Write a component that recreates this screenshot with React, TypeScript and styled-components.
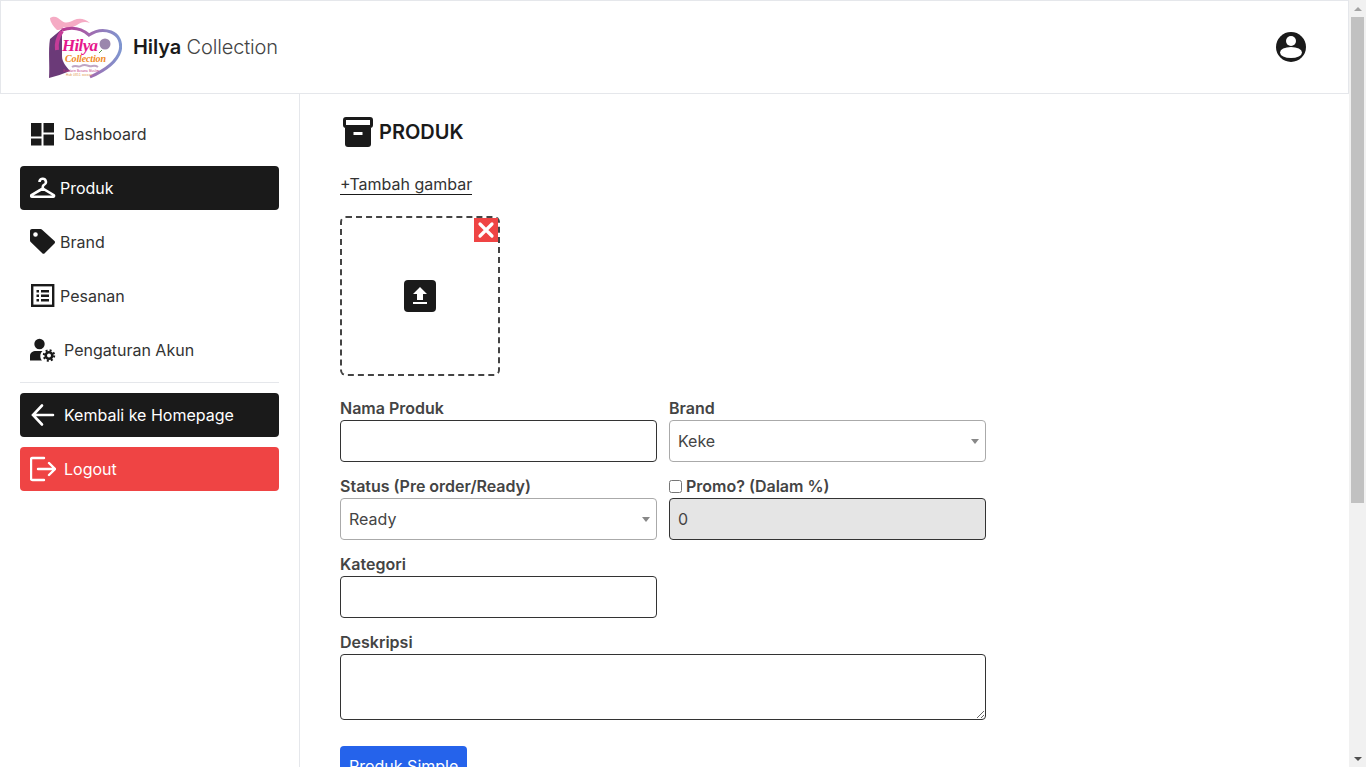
import React from 'react';
import styled, { createGlobalStyle } from 'styled-components';

const GlobalStyle = createGlobalStyle`
  * { box-sizing: border-box; }
  body {
    margin: 0;
    font-family: Inter, "Liberation Sans", sans-serif;
    font-size: 16px;
    color: #1a1a1a;
    background: #fff;
  }
`;

const Page = styled.div`
  display: flex;
  flex-direction: column;
  min-height: 1157px;
  margin-right: 17px;
`;

const ScrollRail = styled.div`
  position: fixed;
  top: 0;
  right: 0;
  bottom: 0;
  display: flex;
  flex-direction: column;
  width: 17px;
  background: #f1f1f1;
`;

const ScrollArrow = styled.div<{ $down?: boolean }>`
  display: flex;
  align-items: center;
  justify-content: center;
  flex: none;
  height: 17px;
  &::before {
    content: '';
    border-style: solid;
    border-width: ${(p) => (p.$down ? '4px 4px 0' : '0 4px 4px')};
    border-color: ${(p) =>
      p.$down
        ? '#505050 transparent transparent'
        : 'transparent transparent #a3a3a3'};
  }
`;

const ScrollThumb = styled.div`
  flex: none;
  height: 486px;
  margin: 0 2px;
  background: #c1c1c1;
`;

const ScrollGap = styled.div`
  flex: 1;
`;

const Header = styled.header`
  display: flex;
  align-items: center;
  justify-content: space-between;
  height: 94px;
  padding: 0 42px 0 47px;
  border: 1px solid #e5e7eb;
`;

const Brand = styled.div`
  display: flex;
  align-items: center;
  gap: 11px;
`;

const BrandName = styled.div`
  font-size: 20px;
  font-weight: 300;
  letter-spacing: -0.13px;
  color: #444;
  b {
    font-weight: 600;
    color: #1a1a1a;
  }
`;

const Body = styled.div`
  display: flex;
  flex: 1;
`;

const Sidebar = styled.nav`
  display: flex;
  flex-direction: column;
  gap: 10px;
  flex: none;
  width: 300px;
  padding: 18px 20px;
  border-right: 1px solid #e5e7eb;
`;

type Tone = 'plain' | 'dark' | 'red';

const NavItem = styled.a<{ $tone?: Tone; $gap?: number }>`
  display: flex;
  align-items: center;
  gap: ${(p) => p.$gap ?? 4}px;
  height: 44px;
  padding: 0 10px;
  border-radius: 4px;
  font-weight: 400;
  color: ${(p) => (p.$tone === 'dark' || p.$tone === 'red' ? '#fff' : '#333')};
  background: ${(p) =>
    p.$tone === 'dark' ? '#1a1a1a' : p.$tone === 'red' ? '#ef4444' : 'transparent'};
`;

const NavIcon = styled.svg`
  flex: none;
  width: 26px;
  height: 26px;
`;

const Divider = styled.hr`
  width: 100%;
  margin: 0;
  border: 0;
  border-top: 1px solid #e5e7eb;
`;

const Main = styled.main`
  flex: 1;
  padding: 23px 40px 0;
`;

const Title = styled.h1`
  display: flex;
  align-items: center;
  gap: 6px;
  margin: 0 0 27px;
  font-size: 20px;
  line-height: 30px;
  font-weight: 600;
  svg {
    margin-left: 3px;
  }
`;

const AddImage = styled.a`
  display: inline-block;
  height: 21px;
  line-height: 20px;
  color: #333;
  border-bottom: 1px solid #1a1a1a;
`;

const UploadBox = styled.div`
  position: relative;
  display: flex;
  align-items: center;
  justify-content: center;
  width: 160px;
  height: 160px;
  margin: 21px 0 20px;
  border: 2px dashed #444;
  border-radius: 6px;
`;

const UploadButton = styled.div`
  display: flex;
  align-items: center;
  justify-content: center;
  width: 32px;
  height: 32px;
  border-radius: 4px;
  background: #1a1a1a;
`;

const RemoveButton = styled.div`
  position: absolute;
  top: 0;
  right: 0;
  display: flex;
  align-items: center;
  justify-content: center;
  width: 24px;
  height: 24px;
  background: #ef4444;
`;

const FormGrid = styled.div`
  display: grid;
  grid-template-columns: 317px 317px;
  column-gap: 12px;
  row-gap: 12px;
  width: 646px;
`;

const Field = styled.div<{ $wide?: boolean }>`
  grid-column: ${(p) => (p.$wide ? '1 / 3' : 'auto')};
  display: flex;
  flex-direction: column;
`;

const Label = styled.label`
  display: flex;
  align-items: center;
  gap: 4px;
  height: 24px;
  font-weight: 600;
  color: #444;
  input {
    width: 13px;
    height: 13px;
    margin: 0;
  }
`;

const TextInput = styled.input<{ $muted?: boolean }>`
  width: 100%;
  height: 42px;
  padding: 0 8px;
  border: 1px solid #333;
  border-radius: 4px;
  font: inherit;
  color: #444;
  background: ${(p) => (p.$muted ? '#e5e5e5' : '#fff')};
`;

const TextArea = styled.textarea`
  display: block;
  width: 100%;
  height: 66px;
  border: 1px solid #333;
  border-radius: 4px;
  font: inherit;
  background: #fff;
`;

const SelectBox = styled.div`
  display: flex;
  align-items: center;
  justify-content: space-between;
  height: 42px;
  padding: 0 6px 0 8px;
  border: 1px solid #aaa;
  border-radius: 4px;
  color: #444;
  &::after {
    content: '';
    border-style: solid;
    border-width: 5px 4px 0;
    border-color: #888 transparent transparent;
  }
`;

const SubmitButton = styled.button`
  display: block;
  height: 40px;
  margin-top: 26px;
  padding: 0 9px;
  border: 0;
  border-radius: 4px;
  font: inherit;
  font-weight: 400;
  color: #fff;
  background: #2563eb;
`;

function HeartLogo(): JSX.Element {
  return (
    <svg width="74" height="64" viewBox="8 6 74 64">
      <defs>
        <linearGradient id="heart" x1="0" y1="0" x2="1" y2="0">
          <stop offset="0" stopColor="#b8358f" />
          <stop offset="0.5" stopColor="#a06cb0" />
          <stop offset="1" stopColor="#7f95cf" />
        </linearGradient>
      </defs>
      <path
        d="M10 9c5-3 8 0 12 3 4 3 8 1 12-1 5-2 10-2 16 3-5-2-9-1-13 2-5 3-10 4-13 2-3 3-5 3-7 3-3-3-7-8-7-12z"
        fill="#f5abc4"
      />
      <path d="M22 20L10 30C8 42 10 56 9 69c7-2 14-4 21-7-4-5-8-9-8-15z" fill="#6b3a78" />
      <path
        d="M22 21c9-3 19-2 27 5 6-4 14-6 22-3 8 3 11 11 9 19-3 10-14 19-30 26"
        fill="none"
        stroke="url(#heart)"
        strokeWidth="3"
      />
      <path d="M22 22c-4 6-6 13-5 19" fill="none" stroke="#c53c98" strokeWidth="4" />
      <text x="22" y="42" fontFamily="Liberation Serif" fontStyle="italic" fontWeight="700" fontSize="17" fill="#e6178c" textLength="36">
        Hilya
      </text>
      <circle cx="65" cy="35" r="5.500" fill="#9b86ad" />
      <path d="M59 44l3-3" stroke="#5a9a4a" strokeWidth="1" />
      <text x="25" y="53" fontFamily="Liberation Serif" fontStyle="italic" fontWeight="700" fontSize="10" fill="#f08a24" textLength="41">
        Collection
      </text>
      <path d="M32 58c4-3 6 1 9-1s5-1 8 0 5-2 9 1" fill="none" stroke="#bfa6c4" strokeWidth="2" />
      <text x="23" y="63" fontFamily="Liberation Sans" fontSize="3" fill="#c2347f" textLength="36">
        Bandarin Busana Muslim
      </text>
      <text x="26" y="67" fontFamily="Liberation Sans" fontSize="3" fill="#e0913c" textLength="26">
        Hub 0851 xxxxxx
      </text>
    </svg>
  );
}

export default function App(): JSX.Element {
  return (
    <Page>
      <GlobalStyle />
      <Header>
        <Brand>
          <HeartLogo />
          <BrandName>
            <b>Hilya</b> Collection
          </BrandName>
        </Brand>
        <svg width="30" height="30" viewBox="0 0 30 30">
          <circle cx="15" cy="15" r="15" fill="#1a1a1a" />
          <circle cx="15" cy="9" r="5" fill="#fff" />
          <ellipse cx="15" cy="20.500" rx="11" ry="5.500" fill="#fff" />
        </svg>
      </Header>
      <Body>
        <Sidebar>
          <NavItem $gap={8}>
            <NavIcon viewBox="0 0 26 26" fill="#1a1a1a">
              <path d="M1 2h10.500v13.500H1zM1 17.500h10.500v7H1zM13.500 2H24v9.500H13.500zM13.500 13.500H24V24.500H13.500z" />
            </NavIcon>
            Dashboard
          </NavItem>
          <NavItem $tone="dark">
            <NavIcon viewBox="0 0 26 26" fill="none" stroke="#fff" strokeWidth="2.600">
              <path d="M9.500 7a3.200 3.200 0 1 1 4.500 2.900c-.7.4-1.200.9-1.200 1.800v1.800L23.600 20c.8.600.4 1.700-.5 1.700H2c-.9 0-1.300-1.100-.5-1.700l11.300-6.500" />
            </NavIcon>
            Produk
          </NavItem>
          <NavItem>
            <NavIcon viewBox="1 0 26 26" fill="#1a1a1a">
              <path
                fillRule="evenodd"
                d="M3 0h8.500c.7 0 1.200.2 1.600.7L25.500 12c.7.700.7 1.700 0 2.400l-9.800 9.800c-.7.7-1.700.7-2.400 0L1.700 13C1.200 12.500 1 11.900 1 11.200V2C1 .9 1.900 0 3 0zM6.500 3.200a2.300 2.300 0 1 0 0 4.600 2.300 2.300 0 0 0 0-4.600z"
              />
            </NavIcon>
            Brand
          </NavItem>
          <NavItem>
            <NavIcon viewBox="0 0 26 26">
              <rect x="2.200" y="2.200" width="21" height="20.600" fill="none" stroke="#1a1a1a" strokeWidth="2.400" />
              <path
                d="M6.500 7h2.500v2.500H6.500zM11 7h8v2.500h-8zM6.500 11.500h2.500V14H6.500zM11 11.500h8V14h-8zM6.500 16h2.500v2.500H6.500zM11 16h8v2.500h-8z"
                fill="#1a1a1a"
              />
            </NavIcon>
            Pesanan
          </NavItem>
          <NavItem $gap={8}>
            <NavIcon viewBox="1 0 26 26" fill="#1a1a1a">
              <circle cx="10.500" cy="7" r="5.200" />
              <path d="M1 23.500v-4.500c0-3.300 2.700-5 6-5h6.500c-1.300 1.200-2.200 3-2.200 5 0 1.800.6 3.300 1.600 4.500z" />
              <circle cx="20" cy="18.500" r="3.300" fill="none" stroke="#1a1a1a" strokeWidth="2.600" />
              <circle cx="20" cy="18.500" r="5.200" fill="none" stroke="#1a1a1a" strokeWidth="2" strokeDasharray="2 2.080" />
            </NavIcon>
            Pengaturan Akun
          </NavItem>
          <Divider />
          <NavItem $tone="dark" $gap={8}>
            <NavIcon viewBox="0 0 26 26" fill="none" stroke="#fff" strokeWidth="2.600" strokeLinecap="round">
              <path d="M23 13H3.500M12 3.500L3 13l9 9.500" />
            </NavIcon>
            Kembali ke Homepage
          </NavItem>
          <NavItem $tone="red" $gap={8}>
            <NavIcon viewBox="0 0 26 26" fill="none" stroke="#fff" strokeWidth="2.400" strokeLinecap="round">
              <path d="M14 2H2.500A1.500 1.500 0 0 0 1 3.500v19A1.500 1.500 0 0 0 2.500 24H14M8 13h17M19 7l6 6-6 6" />
            </NavIcon>
            Logout
          </NavItem>
        </Sidebar>
        <Main>
          <Title>
            <svg width="30" height="30" viewBox="0 0 30 30">
              <rect x="1.500" y="1.500" width="27" height="8" rx="1.500" fill="#fff" stroke="#1a1a1a" strokeWidth="3" />
              <path d="M2 10.500h26V27a3 3 0 0 1-3 3H5a3 3 0 0 1-3-3z" fill="#1a1a1a" />
              <rect x="10.500" y="15" width="9" height="3" fill="#fff" />
            </svg>
            PRODUK
          </Title>
          <AddImage>+Tambah gambar</AddImage>
          <UploadBox>
            <UploadButton>
              <svg width="24" height="24" viewBox="0 0 24 24" fill="#fff">
                <path d="M9 16h6v-6h4l-7-7-7 7h4zm-4 2h14v2H5z" />
              </svg>
            </UploadButton>
            <RemoveButton>
              <svg width="18" height="18" viewBox="0 0 18 18" stroke="#fff" strokeWidth="3.200" strokeLinecap="round">
                <path d="M3 3l12 12M15 3L3 15" />
              </svg>
            </RemoveButton>
          </UploadBox>
          <FormGrid>
            <Field>
              <Label>Nama Produk</Label>
              <TextInput />
            </Field>
            <Field>
              <Label>Brand</Label>
              <SelectBox>Keke</SelectBox>
            </Field>
            <Field>
              <Label>Status (Pre order/Ready)</Label>
              <SelectBox>Ready</SelectBox>
            </Field>
            <Field>
              <Label>
                <input type="checkbox" />
                Promo? (Dalam %)
              </Label>
              <TextInput $muted defaultValue="0" disabled />
            </Field>
            <Field>
              <Label>Kategori</Label>
              <TextInput />
            </Field>
            <div />
            <Field $wide>
              <Label>Deskripsi</Label>
              <TextArea />
            </Field>
          </FormGrid>
          <SubmitButton type="button">Produk Simple</SubmitButton>
        </Main>
      </Body>
      <ScrollRail>
        <ScrollArrow />
        <ScrollThumb />
        <ScrollGap />
        <ScrollArrow $down />
      </ScrollRail>
    </Page>
  );
}
